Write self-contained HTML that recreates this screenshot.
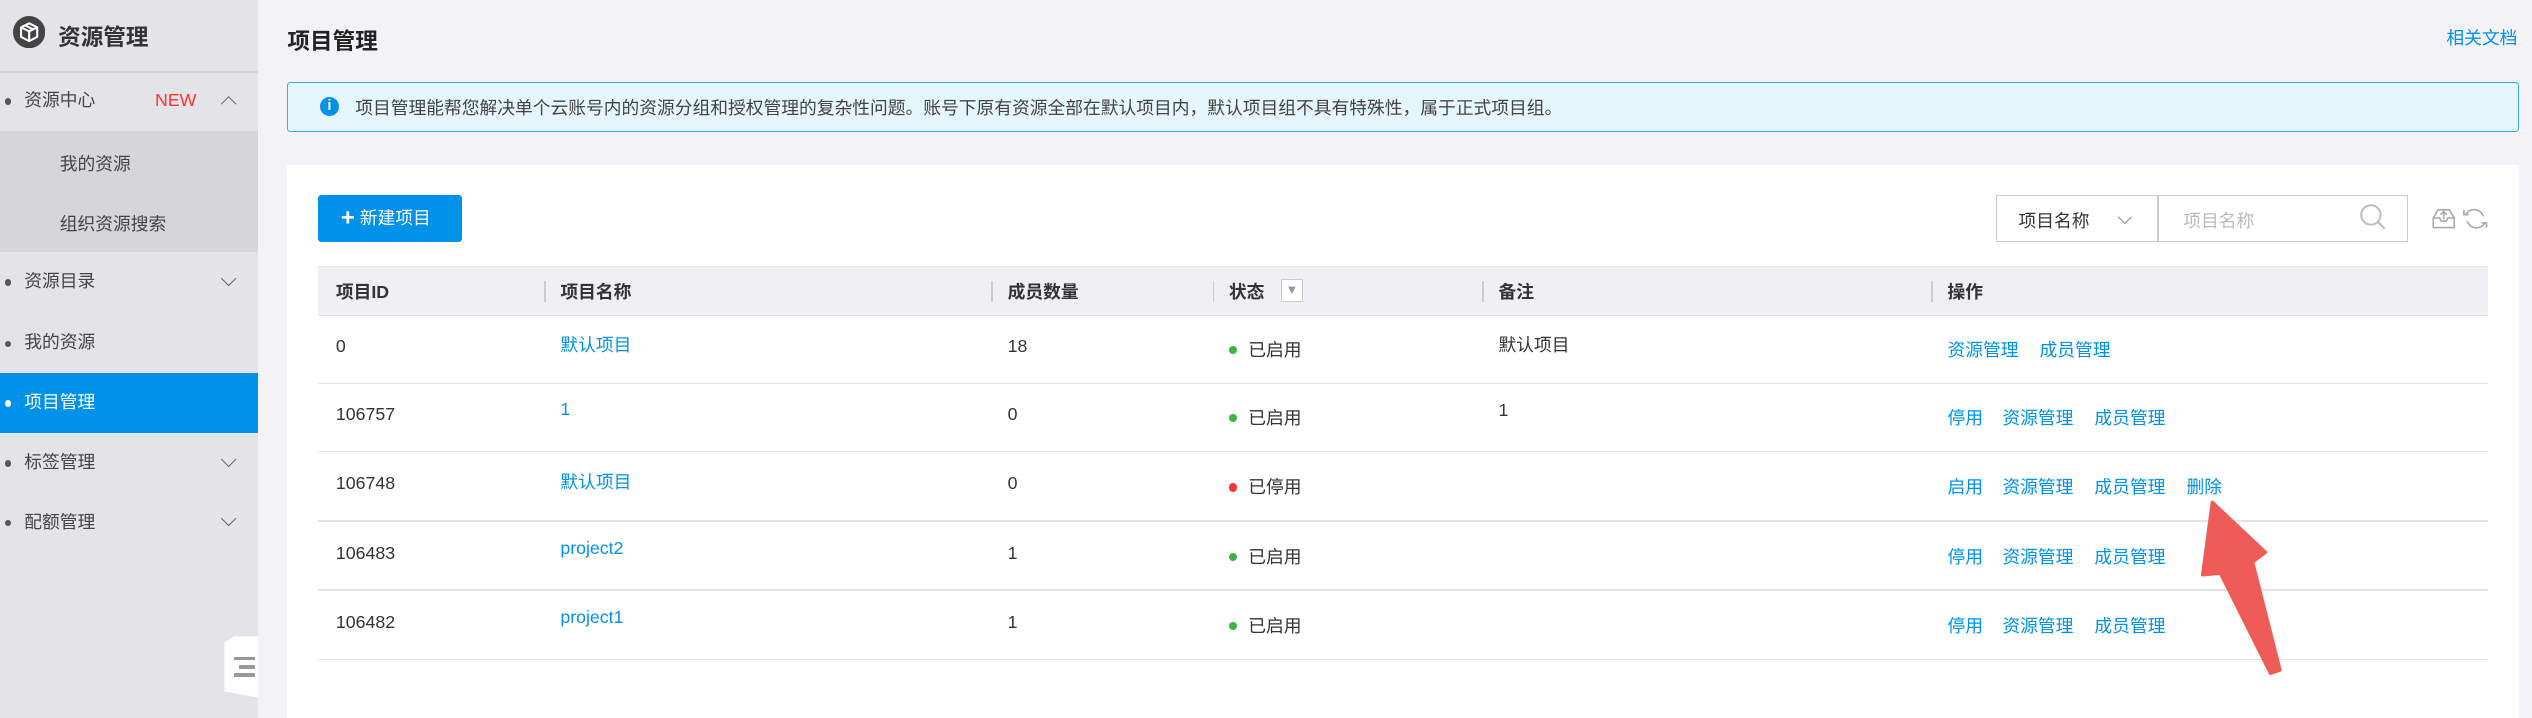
<!DOCTYPE html>
<html><head><meta charset="utf-8"><style>
*{margin:0;padding:0;box-sizing:border-box}
html,body{width:2532px;height:718px;overflow:hidden;background:#f3f3f7}
#w{zoom:1.6148;width:1568px;height:445px;position:relative;font-family:"Liberation Sans","Noto Sans CJK SC",sans-serif;font-size:11px;color:#333;background:#f3f3f7}
.a{position:absolute;white-space:nowrap}
.sb{left:0;top:0;width:160px;height:445px;background:#e4e3e8}
.mi{position:absolute;left:0;width:160px;height:37px;line-height:37px;padding-left:15px;color:#444}
.mi:before{content:"";position:absolute;left:3px;top:17px;width:4px;height:4px;border-radius:50%;background:#555}
.chev{position:absolute;right:15px;top:13px;width:7px;height:7px;border-right:1px solid #666;border-bottom:1px solid #666;transform:rotate(45deg)}
.lnk{color:#0091ea}
.th{font-weight:bold;color:#333}
.hl{position:absolute;left:197px;width:1344px;height:1px;background:#e3e3e6}
.dot{display:inline-block;width:5px;height:5px;border-radius:50%;margin-right:7px;vertical-align:1px}
</style></head><body><div id="w">
<div class="a sb"></div>
<svg class="a" style="left:8px;top:10px" width="20" height="20" viewBox="0 0 20 20"><circle cx="10" cy="10" r="10" fill="#444"/><path d="M10 4.5l5 2.5v6l-5 2.5-5-2.5v-6z M5 7l5 2.5 5-2.5 M10 9.5v6 M7.5 5.8l5 2.5" fill="none" stroke="#fff" stroke-width="1.3" stroke-linejoin="round"/></svg>
<div class="a" style="left:36px;top:12px;font-size:14px;font-weight:bold;color:#333">资源管理</div>
<div class="a" style="left:0;top:44px;width:160px;height:1px;background:#d4d3d8"></div>
<div class="mi" style="top:44px">资源中心<span style="position:absolute;left:96px;color:#f33">NEW</span><span class="chev" style="top:17px;transform:rotate(-135deg)"></span></div>
<div class="a" style="left:0;top:81px;width:160px;height:75px;background:#d6d5da"></div>
<div class="a" style="left:37px;top:93px;color:#444">我的资源</div>
<div class="a" style="left:37px;top:130px;color:#444">组织资源搜索</div>
<div class="mi" style="top:156px">资源目录<span class="chev"></span></div>
<div class="mi" style="top:194px">我的资源</div>
<div class="mi" style="top:231px;background:#0091ea;color:#fff">项目管理</div>
<div class="a" style="left:3px;top:248px;width:4px;height:4px;border-radius:50%;background:#fff"></div>
<div class="mi" style="top:268px">标签管理<span class="chev"></span></div>
<div class="mi" style="top:305px">配额管理<span class="chev"></span></div>
<div class="a" style="left:139px;top:394px;width:21px;height:38px;background:#fff;clip-path:polygon(30% 0,100% 0,100% 100%,0 90%,0 10%)"></div>
<div class="a" style="left:145px;top:407px;width:13px;height:2px;background:#999"></div>
<div class="a" style="left:148px;top:412px;width:10px;height:2px;background:#999"></div>
<div class="a" style="left:145px;top:417px;width:13px;height:2px;background:#999"></div>

<div class="a" style="left:178px;top:14px;font-size:14px;font-weight:bold;color:#222">项目管理</div>
<div class="a lnk" style="left:1515px;top:15px">相关文档</div>
<div class="a" style="left:178px;top:51px;width:1382px;height:31px;background:#e5f6fd;border:1px solid #40a9ee;border-radius:2px"></div>
<div class="a" style="left:198px;top:60px;width:12px;height:12px;border-radius:50%;background:#0091ea;color:#fff;font-size:9px;font-weight:bold;text-align:center;line-height:12px">i</div>
<div class="a" style="left:220px;top:58px;color:#444">项目管理能帮您解决单个云账号内的资源分组和授权管理的复杂性问题。账号下原有资源全部在默认项目内，默认项目组不具有特殊性，属于正式项目组。</div>

<div class="a" style="left:178px;top:102px;width:1382px;height:350px;background:#fff"></div>
<div class="a" style="left:197px;top:121px;width:89px;height:29px;background:#0091ea;border-radius:2px;color:#fff;line-height:29px;padding-left:14px"><b style="font-size:15px;vertical-align:-1px">+</b> 新建项目</div>
<div class="a" style="left:1236px;top:121px;width:255px;height:29px;border:1px solid #ccc"></div>
<div class="a" style="left:1336px;top:121px;width:1px;height:29px;background:#ccc"></div>
<div class="a" style="left:1250px;top:128px;color:#333">项目名称</div>
<div class="a" style="left:1313px;top:131px;width:6px;height:6px;border-right:1px solid #888;border-bottom:1px solid #888;transform:rotate(45deg)"></div>
<div class="a" style="left:1352px;top:128px;color:#bbb">项目名称</div>
<svg class="a" style="left:1460px;top:125px" width="18" height="18"><circle cx="8" cy="8" r="6" fill="none" stroke="#bbb" stroke-width="1.2"/><path d="M12.5 12.5l4 4" stroke="#bbb" stroke-width="1.3"/></svg>
<svg class="a" style="left:1505px;top:127px" width="36" height="16"><path d="M2 8l3-5h7l3 5v6H2z M2 8h4l1 2h3l1-2h4 M8.5 9V4 M6.5 6l2-2 2 2" fill="none" stroke="#aaa" stroke-width="1"/><path d="M33 7a6 6 0 0 0-11-1 M23 10a6 6 0 0 0 11 1 M21 3v3h3 M35 14v-3h-3" fill="none" stroke="#aaa" stroke-width="1"/></svg>

<div class="a" style="left:197px;top:165px;width:1344px;height:30px;background:#efeff4;border-top:1px solid #e3e3e6"></div>
<div class="hl" style="top:195px"></div>
<div class="a th" style="left:208px;top:172px">项目ID</div>
<div class="a" style="left:337px;top:174px;width:1px;height:13px;background:#ccc"></div>
<div class="a th" style="left:347px;top:172px">项目名称</div>
<div class="a" style="left:614px;top:174px;width:1px;height:13px;background:#ccc"></div>
<div class="a th" style="left:624px;top:172px">成员数量</div>
<div class="a" style="left:751px;top:174px;width:1px;height:13px;background:#ccc"></div>
<div class="a th" style="left:761px;top:172px">状态</div>
<div class="a" style="left:793px;top:173px;width:14px;height:14px;border:1px solid #ccc;background:#fff;color:#999;font-size:8px;text-align:center;line-height:12px">▼</div>
<div class="a" style="left:918px;top:174px;width:1px;height:13px;background:#ccc"></div>
<div class="a th" style="left:928px;top:172px">备注</div>
<div class="a" style="left:1196px;top:174px;width:1px;height:13px;background:#ccc"></div>
<div class="a th" style="left:1206px;top:172px">操作</div>

<div class="a" style="left:208px;top:208px">0</div>
<div class="a lnk" style="left:347px;top:205px">默认项目</div>
<div class="a" style="left:624px;top:208px">18</div>
<div class="a" style="left:761px;top:208px"><span class="dot" style="background:#3bb54a"></span>已启用</div>
<div class="a" style="left:928px;top:205px">默认项目</div>
<div class="a lnk" style="left:1206px;top:208px">资源管理</div><div class="a lnk" style="left:1263px;top:208px">成员管理</div>
<div class="hl" style="top:237px"></div>

<div class="a" style="left:208px;top:250px">106757</div>
<div class="a lnk" style="left:347px;top:247px">1</div>
<div class="a" style="left:624px;top:250px">0</div>
<div class="a" style="left:761px;top:250px"><span class="dot" style="background:#3bb54a"></span>已启用</div>
<div class="a" style="left:928px;top:248px">1</div>
<div class="a lnk" style="left:1206px;top:250px">停用</div><div class="a lnk" style="left:1240px;top:250px">资源管理</div><div class="a lnk" style="left:1297px;top:250px">成员管理</div>
<div class="hl" style="top:279px"></div>

<div class="a" style="left:208px;top:293px">106748</div>
<div class="a lnk" style="left:347px;top:290px">默认项目</div>
<div class="a" style="left:624px;top:293px">0</div>
<div class="a" style="left:761px;top:293px"><span class="dot" style="background:#f33"></span>已停用</div>
<div class="a lnk" style="left:1206px;top:293px">启用</div><div class="a lnk" style="left:1240px;top:293px">资源管理</div><div class="a lnk" style="left:1297px;top:293px">成员管理</div><div class="a lnk" style="left:1354px;top:293px">删除</div>
<div class="hl" style="top:322px"></div>

<div class="a" style="left:208px;top:336px">106483</div>
<div class="a lnk" style="left:347px;top:333px">project2</div>
<div class="a" style="left:624px;top:336px">1</div>
<div class="a" style="left:761px;top:336px"><span class="dot" style="background:#3bb54a"></span>已启用</div>
<div class="a lnk" style="left:1206px;top:336px">停用</div><div class="a lnk" style="left:1240px;top:336px">资源管理</div><div class="a lnk" style="left:1297px;top:336px">成员管理</div>
<div class="hl" style="top:365px"></div>

<div class="a" style="left:208px;top:379px">106482</div>
<div class="a lnk" style="left:347px;top:376px">project1</div>
<div class="a" style="left:624px;top:379px">1</div>
<div class="a" style="left:761px;top:379px"><span class="dot" style="background:#3bb54a"></span>已启用</div>
<div class="a lnk" style="left:1206px;top:379px">停用</div><div class="a lnk" style="left:1240px;top:379px">资源管理</div><div class="a lnk" style="left:1297px;top:379px">成员管理</div>
<div class="hl" style="top:408px"></div>

<svg class="a" style="left:0;top:0" width="1568" height="445"><polygon points="1370,311 1403,342 1395,348 1412,415 1406,417 1375,355 1364,356" fill="#ef5b56" stroke="#ef5b56" stroke-width="2" stroke-linejoin="round"/></svg>
</div></body></html>
